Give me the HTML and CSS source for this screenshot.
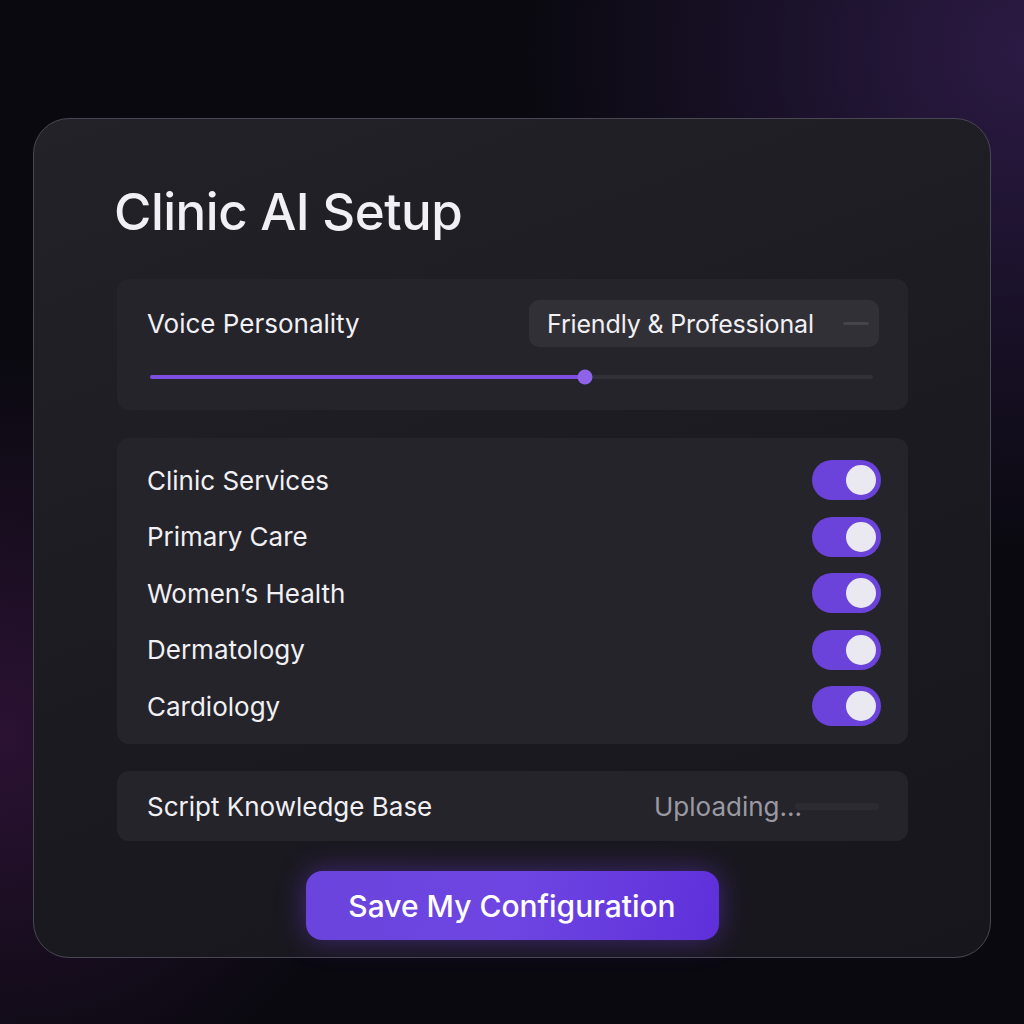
FILE: index.html
```html
<!DOCTYPE html>
<html lang="en">
<head>
  <meta charset="UTF-8">
  <title>Clinic AI Setup</title>
  <link rel="stylesheet" href="styles.css">
</head>
<body>
  <div class="card">
    <h1>Clinic AI Setup</h1>

    <div class="panel voice">
      <div class="voice-row">
        <span class="label">Voice Personality</span>
        <div class="select">
          <span>Friendly &amp; Professional</span>
          <span class="dash"></span>
        </div>
      </div>
      <div class="slider">
        <div class="fill" style="width: 60.2%"></div>
        <div class="thumb" style="left: 60.2%"></div>
      </div>
    </div>

    <div class="panel services">
      <div class="row"><span class="label">Clinic Services</span><span class="toggle"></span></div>
      <div class="row"><span class="label">Primary Care</span><span class="toggle"></span></div>
      <div class="row"><span class="label">Women’s Health</span><span class="toggle"></span></div>
      <div class="row"><span class="label">Dermatology</span><span class="toggle"></span></div>
      <div class="row"><span class="label">Cardiology</span><span class="toggle"></span></div>
    </div>

    <div class="panel kb">
      <span class="label">Script Knowledge Base</span>
      <div class="upload">
        <span class="status">Uploading...</span>
        <span class="track"></span>
      </div>
    </div>

    <div class="actions">
      <button>Save My Configuration</button>
    </div>
  </div>
</body>
</html>
```

FILE: styles.css
```css
html, body {
  height: 100%;
}
body {
  margin: 0;
  font-family: Inter, 'Noto Sans', sans-serif;
  color: #f1f0f4;
  background:
    radial-gradient(circle at 100% 5%, rgba(70, 40, 110, 0.55), transparent 35%),
    radial-gradient(circle at 0% 72%, rgba(70, 25, 80, 0.55), transparent 30%),
    #0a0910;
  padding-top: 118px;
  box-sizing: border-box;
}
.card {
  width: 958px;
  height: 840px;
  margin-left: 33px;
  box-sizing: border-box;
  border: 1.5px solid #4a4754;
  border-radius: 36px;
  background: linear-gradient(160deg, #232228 0%, #1b1a20 55%, #18161d 100%);
  padding: 62px 82px 0 82px;
}
h1 {
  margin: 0 0 36px -2px;
  font-size: 51px;
  font-weight: 500;
  letter-spacing: -0.5px;
  line-height: 62px;
}
.panel {
  background: #25242a;
  border-radius: 12px;
  margin-left: 1px;
}
.label {
  font-size: 26px;
  margin-left: -1px;
}
.voice {
  height: 131px;
  padding: 21px 29px 0 31px;
  box-sizing: border-box;
}
.voice-row {
  display: flex;
  justify-content: space-between;
  align-items: center;
}
.select {
  width: 350px;
  height: 47px;
  box-sizing: border-box;
  background: #303036;
  border-radius: 10px;
  display: flex;
  align-items: center;
  justify-content: space-between;
  padding: 0 10px 0 18px;
  font-size: 25px;
  letter-spacing: -0.15px;
}
.dash {
  width: 26px;
  height: 3px;
  border-radius: 2px;
  background: #45444b;
}
.slider {
  position: relative;
  height: 4px;
  margin: 28px 6px 0 2px;
  background: #323137;
  border-radius: 2px;
}
.fill {
  height: 100%;
  background: #7d4fe0;
  border-radius: 2px;
}
.thumb {
  position: absolute;
  top: 50%;
  width: 15px;
  height: 15px;
  border-radius: 50%;
  background: #8f63e8;
  transform: translate(-50%, -50%);
}
.services {
  margin-top: 28px;
  padding: 22px 27px 18px 31px;
  display: flex;
  flex-direction: column;
  gap: 16.5px;
}
.row {
  display: flex;
  justify-content: space-between;
  align-items: center;
  height: 40px;
}
.toggle {
  position: relative;
  width: 69px;
  height: 40px;
  border-radius: 20px;
  background: #6b43da;
}
.toggle::after {
  content: "";
  position: absolute;
  right: 5px;
  top: 5px;
  width: 30px;
  height: 30px;
  border-radius: 50%;
  background: #eae9f1;
}
.kb {
  margin-top: 27px;
  height: 70px;
  padding: 0 29px 0 31px;
  display: flex;
  align-items: center;
  justify-content: space-between;
}
.upload {
  display: flex;
  align-items: center;
}
.status {
  font-size: 26px;
  color: #9b9aa2;
  position: relative;
}
.track {
  width: 84px;
  height: 7px;
  margin-left: -7px;
  border-radius: 4px;
  background: #2c2b31;
}
.actions {
  margin-top: 30px;
  display: flex;
  justify-content: center;
}
button {
  width: 413px;
  height: 69px;
  border: none;
  border-radius: 16px;
  background: linear-gradient(100deg, #6a44dc 0%, #6e45e2 50%, #5f30da 100%);
  color: #fff;
  font-family: Inter, 'Noto Sans', sans-serif;
  font-size: 30px;
  font-weight: 500;
  box-shadow: 0 0 28px rgba(112, 62, 230, 0.45);
  cursor: pointer;
}
```
